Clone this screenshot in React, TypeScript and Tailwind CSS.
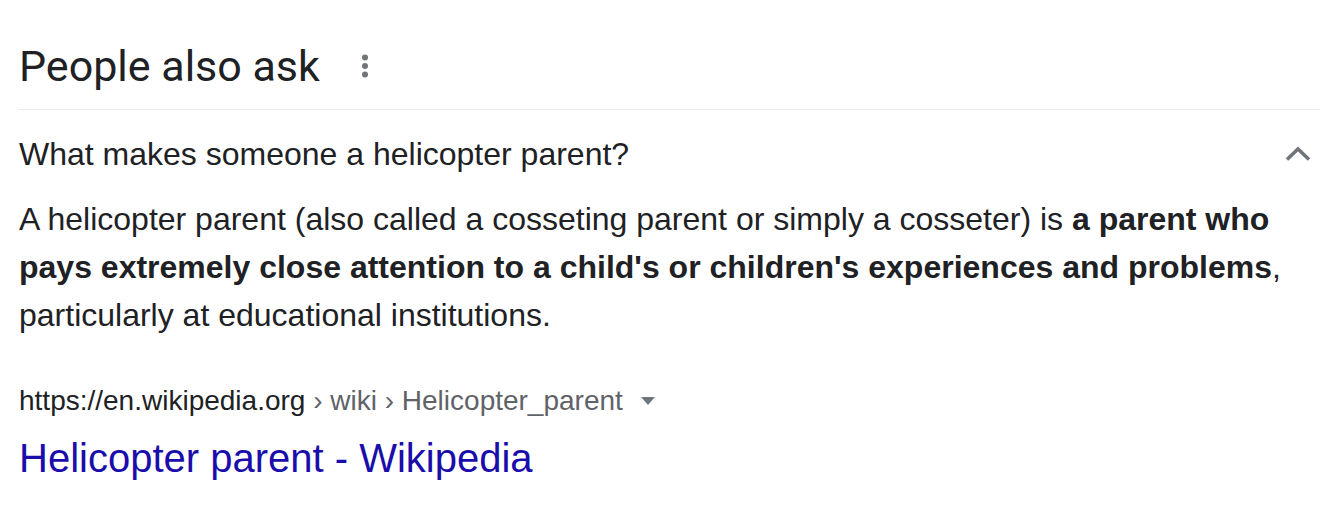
import React from "react";

export default function App() {
  return (
    <div className="w-[1338px] h-[508px] bg-white overflow-hidden" style={{ fontFamily: '"Liberation Sans", Arial, sans-serif' }}>
      <div className="pl-[19px] pr-[18px]">
        <div className="flex items-center h-[110px] pt-[22px] border-b border-[#ebebeb]">
          <h2 className="text-[43px] leading-[48px] text-[#202124]" style={{ fontFamily: 'Roboto, "Open Sans", sans-serif' }}>
            People also ask
          </h2>
          <svg className="ml-[41px]" width="8" height="24" viewBox="0 0 8 24">
            <circle cx="4" cy="3.5" r="3" fill="#70757a" />
            <circle cx="4" cy="12" r="3" fill="#70757a" />
            <circle cx="4" cy="20.5" r="3" fill="#70757a" />
          </svg>
        </div>
        <div className="flex items-center justify-between h-[88px]">
          <span className="text-[32px] text-[#202124]">What makes someone a helicopter parent?</span>
          <svg className="mr-[9px]" width="26" height="16" viewBox="0 0 26 16">
            <path d="M2 13.5 L13 3 L24 13.5" stroke="#70757a" strokeWidth="3.5" fill="none" />
          </svg>
        </div>
        <p className="text-[32px] leading-[48px] text-[#202124] -mt-[3px]">
          A helicopter parent (also called a cosseting parent or simply a cosseter) is{" "}
          <b>a parent who pays extremely close attention to a child's or children's experiences and problems</b>,
          particularly at educational institutions.
        </p>
        <div className="mt-[46px] flex items-center text-[28px] leading-[32px]">
          <span className="text-[#202124]">https://en.wikipedia.org</span>
          <span className="text-[#5f6368]">&nbsp;› wiki › Helicopter_parent</span>
          <svg className="ml-[18px]" width="14" height="8" viewBox="0 0 14 8">
            <path d="M0 0 L14 0 L7 8 Z" fill="#70757a" />
          </svg>
        </div>
        <div className="mt-[17px] text-[40px] leading-[48px] text-[#1a0dab]">Helicopter parent - Wikipedia</div>
      </div>
    </div>
  );
}
